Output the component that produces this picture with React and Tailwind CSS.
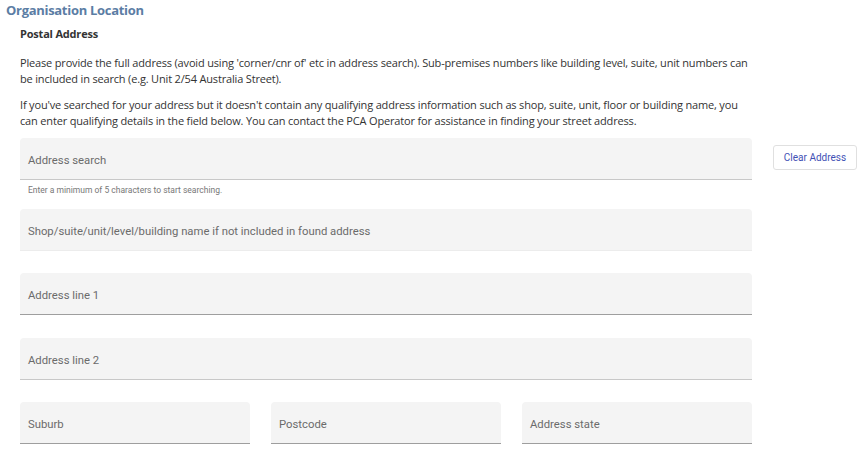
import React from "react";

function Field({ label, border = "border-[#9e9e9e]", className = "" }) {
  return (
    <div
      className={`h-[42px] bg-[#f4f4f4] rounded-t-[4px] border-b ${border} flex items-center px-[8px] pt-[5px] ${className}`}
    >
      <span className="text-[11.3px] text-[#6b6b6b] font-['Roboto',sans-serif]">{label}</span>
    </div>
  );
}

export default function App() {
  return (
    <div className="w-[865px] h-[467px] bg-white overflow-hidden font-['Open_Sans',sans-serif] text-[#333]">
      <h1 className="pl-[6px] pt-[1px] text-[13px] leading-[19px] font-bold tracking-[-0.3px] text-[#5b7da4]">
        Organisation Location
      </h1>
      <div className="pl-[20px]">
        <h2 className="mt-[6px] text-[11px] leading-[15px] font-bold tracking-[-0.2px] text-[#333]">Postal Address</h2>
        <p className="mt-[14px] w-[732px] text-[11px] leading-[16px] tracking-[-0.17px]">
          Please provide the full address (avoid using 'corner/cnr of' etc in address search). Sub-premises numbers like building level, suite, unit numbers can be included in search (e.g. Unit 2/54 Australia Street).
        </p>
        <p className="mt-[10px] w-[732px] text-[11px] leading-[16px] tracking-[-0.17px]">
          If you've searched for your address but it doesn't contain any qualifying address information such as shop, suite, unit, floor or building name, you can enter qualifying details in the field below. You can contact the PCA Operator for assistance in finding your street address.
        </p>

        <div className="mt-[9px] flex items-start">
          <div className="w-[732px]">
            <Field label="Address search" border="border-[#c8c8c8]" />
            <div className="pl-[8px] pt-[5px] text-[8.5px] leading-[11px] text-[#777] font-['Roboto',sans-serif]">
              Enter a minimum of 5 characters to start searching.
            </div>
          </div>
          <button className="ml-[21px] mt-[7px] w-[84px] h-[25px] bg-white border border-[#e0e0e0] rounded-[3px] text-[10px] text-[#3f51b5] font-['Roboto',sans-serif]">
            Clear Address
          </button>
        </div>

        <div className="w-[732px]">
          <Field
            label="Shop/suite/unit/level/building name if not included in found address"
            border="border-[#ececec]"
            className="mt-[13px]"
          />
          <Field label="Address line 1" border="border-[#9e9e9e]" className="mt-[22px]" />
          <Field label="Address line 2" border="border-[#c8c8c8]" className="mt-[23px]" />
          <div className="mt-[22px] grid grid-cols-3 gap-[21px]">
            <Field label="Suburb" />
            <Field label="Postcode" />
            <Field label="Address state" />
          </div>
        </div>
      </div>
    </div>
  );
}
